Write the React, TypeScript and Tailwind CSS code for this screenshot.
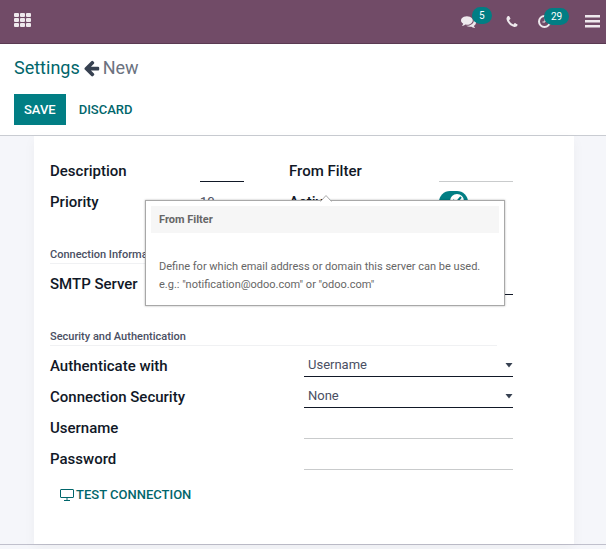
import type { ReactNode } from "react";

const fieldBase = "h-[22px] w-full min-w-0 rounded-none border-b bg-transparent text-[13px] text-[#4a4f63] outline-none";
const optional = "border-[#c9cbcc]";
const required = "border-[#111827]";

function Row({ id, label, wide = false, children }: { id: string; label: string; wide?: boolean; children: ReactNode }) {
  return (
    <div className={`grid h-[31px] items-center ${wide ? "grid-cols-[254px_1fr]" : "grid-cols-[150px_1fr]"}`}>
      <label htmlFor={id} className="text-[15px] leading-5 font-medium whitespace-nowrap text-[#111827]">
        {label}
      </label>
      <div>{children}</div>
    </div>
  );
}

function Heading({ children }: { children: ReactNode }) {
  return (
    <h2 className="mt-[30px] mr-4 mb-1 border-b border-[#f0f1f3] text-[11px] leading-4 font-medium text-[#4a4f63]">
      {children}
    </h2>
  );
}

function Select({ id, options }: { id: string; options: string[] }) {
  return (
    <div className="relative">
      <select id={id} className={`${fieldBase} ${required} block appearance-none pr-4 pl-1`}>
        {options.map((o) => (
          <option key={o}>{o}</option>
        ))}
      </select>
      <svg className="pointer-events-none absolute top-2 right-0" width="8" height="5" viewBox="0 0 8 5" fill="#374151">
        <path d="M0.500 0h7L4 4.500z" />
      </svg>
    </div>
  );
}

const badge = "absolute -top-[7px] rounded-full bg-[#017e84] text-[10px] leading-[17px] text-white";

export default function App() {
  return (
    <div className="flex min-h-screen flex-col bg-[#f5f6fa] font-[Roboto,sans-serif] text-[#374151]">
      <header className="flex h-11 items-center border-b border-[#5a3a52] bg-[#714b67] pr-[6px] pl-[14px] text-[#eee9ed]">
        <button aria-label="Apps" className="pb-1">
          <svg width="17" height="14" viewBox="0 0 17 14" fill="currentColor">
            {[0, 5, 10].map((y) =>
              [0, 6, 12].map((x) => <rect key={`${x}-${y}`} x={x} y={y} width="5" height="4" rx="1" />),
            )}
          </svg>
        </button>
        <nav className="ml-auto flex items-center">
          <button aria-label="Messages" className="relative mr-[29px]">
            <svg width="15" height="15" viewBox="0 0 1792 1792" fill="currentColor">
              <path d="M1408 768q0 139-94 257t-256.5 186.5-353.5 68.5q-86 0-176-16-124 88-278 128-36 9-86 16h-3q-11 0-20.5-8t-11.5-21q-1-3-1-6.5t.5-6.5 2-6l2.5-5 3.5-5.5 4-5 4.5-5 4-4.5q5-6 23-25t26-29.5 22.5-29 25-38.5 20.5-44q-124-72-195-177t-71-224q0-139 94-257t256.5-186.5 353.5-68.5 353.5 68.5 256.5 186.5 94 257zm384 256q0 120-71 224.5t-195 176.5q10 24 20.5 44t25 38.5 22.5 29 26 29.5 23 25q1 1 4 4.5t4.5 5 4 5 3.5 5.5l2.5 5 2 6 .5 6.5-1 6.5q-3 14-13 22t-22 7q-50-7-86-16-154-40-278-128-90 16-176 16-271 0-472-132 58 4 88 4 161 0 309-45t264-129q125-92 192-212t67-254q0-77-23-152 129 71 204 178t75 230z" />
            </svg>
            <span className={`${badge} left-[11px] px-[7px]`}>5</span>
          </button>
          <button aria-label="Call" className="mr-[19px]">
            <svg width="14" height="14" viewBox="0 0 1792 1792" fill="currentColor">
              <path d="M1600 1240q0 27-10 70.5t-21 68.5q-21 50-122 106-94 51-186 51-27 0-53-3.5t-57.5-12.5-47-14.5-55.5-20.5-49-18q-98-35-175-83-127-79-264-216t-216-264q-48-77-83-175-3-9-18-49t-20.5-55.5-14.5-47-12.5-57.5-3.5-53q0-92 51-186 56-101 106-122 25-11 68.5-21t70.5-10q14 0 21 3 18 6 53 76 11 19 30 54t35 63.5 31 53.5q3 4 17.5 25t21.5 35.5 7 28.5q0 20-28.5 50t-62 55-62 53-28.5 46q0 9 5 22.5t8.5 20.5 14 24 11.5 19q76 137 174 235t235 174q2 1 19 11.5t24 14 20.5 8.5 22.5 5q18 0 46-28.5t53-62 55-62 50-28.5q14 0 28.5 7t35.5 21.5 25 17.5q25 15 53.5 31t63.5 35 54 30q70 35 76 53 3 7 3 21z" />
            </svg>
          </button>
          <button aria-label="Activities" className="relative mr-[34px]">
            <svg width="13" height="13" viewBox="0 0 13 13" fill="none" stroke="currentColor">
              <circle cx="6.500" cy="6.500" r="5.500" strokeWidth="2" />
              <path d="M7 3.500v3.500H4.500" />
            </svg>
            <span className={`${badge} left-[6px] px-[7px]`}>29</span>
          </button>
          <button aria-label="Menu">
            <svg width="15" height="13" viewBox="0 0 15 13" fill="currentColor">
              <path d="M0 0h15v2.500H0zM0 5h15v2.500H0zM0 10h15v2.500H0z" />
            </svg>
          </button>
        </nav>
      </header>

      <section className="border-b border-[#c9ccd2] bg-white px-[14px] pt-3 pb-[10px]">
        <h1 className="flex items-center text-lg leading-6">
          <a href="#settings" className="text-[#01666b]">Settings</a>
          <svg className="mr-[3px] ml-[3px]" width="17" height="18" viewBox="64 0 1664 1792" fill="#374151" aria-hidden="true">
            <path d="M1664 896v128q0 53-32.500 90.500t-84.500 37.500h-704l293 294q38 36 38 90t-38 90l-75 76q-37 37-90 37-52 0-91-37l-651-652q-37-37-37-90 0-52 37-91l651-650q38-38 91-38 52 0 90 38l75 74q38 38 38 91t-38 91l-293 293h704q52 0 84.500 37.500t32.500 90.500z" />
          </svg>
          <span className="text-[#6b7280]">New</span>
        </h1>
        <div className="mt-[14px] flex text-[13px] font-medium">
          <button className="h-[31px] bg-[#017e84] px-[10px] text-white">SAVE</button>
          <button className="h-[31px] px-[13px] text-[#01666b]">DISCARD</button>
        </div>
      </section>

      <main className="border-b border-[#c0c0cc] pr-8 pl-[34px]">
        <form className="relative bg-white pt-[19px] pr-[61px] pb-[34px] pl-4 shadow-[0_4px_12px_rgba(0,0,0,0.04)]">
          <div className="grid grid-cols-[194px_1fr] gap-x-[45px]">
            <Row id="description" label="Description">
              <input id="description" required className={`${fieldBase} ${required} block`} />
            </Row>
            <Row id="filter" label="From Filter">
              <input id="filter" aria-describedby="filter-help" className={`${fieldBase} ${optional} block`} />
            </Row>
            <Row id="priority" label="Priority">
              <input id="priority" defaultValue="10" className={`${fieldBase} block border-transparent`} />
            </Row>
            <Row id="active" label="Active">
              <span className="relative block h-[22px] w-[29px]">
                <input id="active" type="checkbox" defaultChecked className="block h-[22px] w-[29px] appearance-none rounded-full bg-[#017e84]" />
                <svg className="pointer-events-none absolute top-[3px] right-1" width="14" height="14" viewBox="0 0 14 14">
                  <circle cx="7" cy="7" r="7" fill="#fff" />
                  <path d="M3 6l3 3 5-6" fill="none" stroke="#017e84" strokeWidth="2" />
                </svg>
              </span>
            </Row>
          </div>

          <Heading>Connection Information</Heading>
          <Row wide id="smtp" label="SMTP Server">
            <input id="smtp" required className={`${fieldBase} ${required} block`} />
          </Row>

          <Heading>Security and Authentication</Heading>
          <Row wide id="auth" label="Authenticate with">
            <Select id="auth" options={["Username", "SSL Certificate"]} />
          </Row>
          <Row wide id="security" label="Connection Security">
            <Select id="security" options={["None", "TLS (STARTTLS)", "SSL/TLS"]} />
          </Row>
          <Row wide id="username" label="Username">
            <input id="username" autoComplete="off" className={`${fieldBase} ${optional} block`} />
          </Row>
          <Row wide id="password" label="Password">
            <input id="password" type="password" autoComplete="off" className={`${fieldBase} ${optional} block`} />
          </Row>

          <button type="button" className="mt-[5px] ml-[10px] flex h-[31px] items-center gap-[2px] text-[13px] font-medium text-[#01666b]">
            <svg width="14" height="12" viewBox="0 0 14 12" fill="none" stroke="currentColor" aria-hidden="true">
              <rect x="0.500" y="0.500" width="13" height="8" rx="0.500" />
              <path d="M7 9v2M4 11.500h6" />
            </svg>
            TEST CONNECTION
          </button>

          <div
            id="filter-help"
            role="tooltip"
            className="absolute top-16 left-[111px] w-[360px] border border-[#a8a8a8] bg-white p-[5px] text-[11px] leading-[18px] text-[#666] shadow-[0_0_2px_rgba(0,0,0,0.3)]"
          >
            <svg className="absolute -top-[6px] left-[174px]" width="12" height="7" viewBox="0 0 12 7">
              <path d="M0.500 6.500L6 0.500l5.500 6" fill="#fff" stroke="#a8a8a8" />
            </svg>
            <h3 className="h-[27px] bg-[#f6f6f6] px-2 leading-[27px] font-bold">From Filter</h3>
            <p className="px-2 pt-[25px] pb-[6px] whitespace-nowrap">
              Define for which email address or domain this server can be used.
              <br />
              e.g.: "notification@odoo.com" or "odoo.com"
            </p>
          </div>
        </form>
      </main>
    </div>
  );
}
